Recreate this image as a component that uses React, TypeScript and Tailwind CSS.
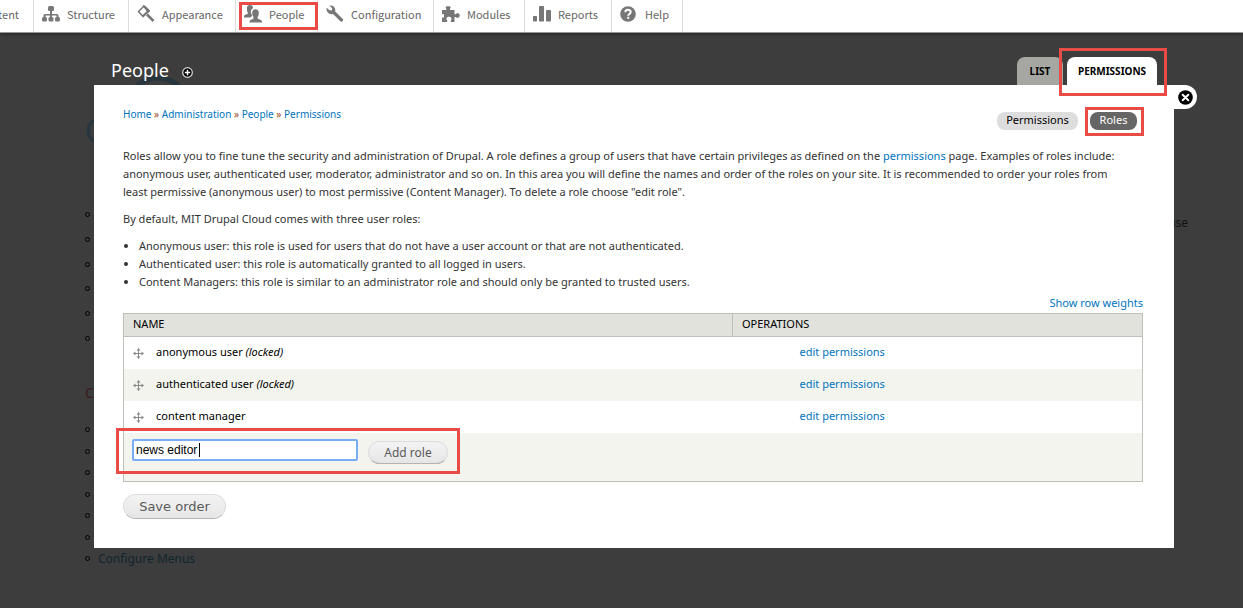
import type { ReactNode } from "react";

const StructureIcon = () => (
  <svg width="18" height="16" viewBox="0 0 18 16" fill="#777">
    <rect x="6" y="0" width="6" height="5" rx="1.5" />
    <path d="M8 4h2v4h5a1.5 1.5 0 0 1 1.5 1.5V11h-2V9.500H10V11H8V9.500H3.500V11h-2V9.500A1.500 1.500 0 0 1 3 8h5z" />
    <rect x="0" y="11" width="5" height="4.500" rx="1.500" />
    <rect x="6.500" y="11" width="5" height="4.500" rx="1.500" />
    <rect x="13" y="11" width="5" height="4.500" rx="1.500" />
  </svg>
);

const AppearanceIcon = () => (
  <svg width="18" height="18" viewBox="0 0 18 18" fill="none" stroke="#777">
    <path d="M6.500 1.500 1.500 6.500l4.500 5L12 6z" strokeWidth="1.500" fill="#fff" />
    <path d="M5.500 0 8 .5 13 5.500 11.500 7.500 9 5.500z" fill="#777" stroke="none" />
    <path d="M5.500 11.500 12 5.500" strokeWidth="2" />
    <path d="m10 9.500 6.500 6.500" strokeWidth="2.500" />
  </svg>
);

const PeopleIcon = () => (
  <svg width="18" height="18" viewBox="0 0 18 18" fill="#777">
    <path d="M6 0c2 0 3 1.200 3 3.200C7.300 4 6.700 5.400 6.900 7.300c.1 1 .5 1.900 1 2.500v1.400L6 12.500H0V11c0-1 2.500-1.300 3.800-2.200V7.300C3.100 6.500 2.900 5.400 2.900 3.400 2.900 1.200 4 0 6 0z" />
    <path d="M11.500 4.300c2.200 0 3.300 1.300 3.300 3.600 0 1.800-.5 3-1.200 3.900v1.700c1.400 1 4.400 1.400 4.400 3v1H5.500v-1c0-1.600 2.600-2 4-3v-1.700c-.8-.9-1.300-2.100-1.300-3.900 0-2.300 1.100-3.600 3.300-3.600z" />
  </svg>
);

const ConfigurationIcon = () => (
  <svg width="18" height="18" viewBox="0 0 18 18" fill="#777">
    <path d="M3.500.6C6.300-.3 9.500 1.700 9.300 5.300c0 .6-.1 1-.1 1.300l7.400 7.200c1.500 1.500-.7 3.900-2.300 2.400L7 8.900C4 9.900.8 8 .5 4.600c0-.7 0-1.300.2-1.900L3.800 5.500l2.100-.3.300-2z" />
  </svg>
);

const ModulesIcon = () => (
  <svg width="18" height="17" viewBox="0 0 18 17" fill="#777">
    <path d="M0 4h4.300V2.700C3.300 2 3.400.3 5 .3h2.200C9 .3 9 2 8 2.700V4h4.500v4.300h1.300c.6-1.400 3.900-1.500 3.900 1.200s-3.200 2.800-3.900 1.400h-1.300V16H8.800v-1.600c1.300-.9 1-3.700-1.800-3.700s-3.200 2.800-1.800 3.700V16H0v-4.500h2V8.300H0z" />
  </svg>
);

const ReportsIcon = () => (
  <svg width="18" height="16" viewBox="0 0 18 16" fill="#777">
    <rect x="0" y="10" width="4" height="5.500" rx=".8" />
    <rect x="6" y="0" width="5" height="15.500" rx=".8" />
    <rect x="13" y="4" width="5" height="11.500" rx=".8" />
  </svg>
);

const HelpIcon = () => (
  <svg width="16" height="16" viewBox="0 0 16 16">
    <circle cx="8" cy="8" r="7.800" fill="#777" />
    <path d="M5.300 6.200C5.400 3 10.700 3.100 10.700 6c0 2-2.500 1.900-2.500 3.800" fill="none" stroke="#fff" strokeWidth="2" />
    <rect x="7.200" y="10.800" width="2" height="2" fill="#fff" />
  </svg>
);

const DragHandle = () => (
  <svg width="11" height="11" viewBox="0 0 11 11" fill="#888">
    <path d="M5 1.500h1V5h3.500v1H6v3.500H5V6H1.500V5H5z" />
    <path d="M5.500 0 7.500 2.500h-4zM5.500 11l2-2.500h-4zM0 5.500l2.500-2v4zM11 5.500l-2.500-2v4z" />
  </svg>
);

const Highlight = ({ className }: { className: string }) => (
  <span className={`pointer-events-none absolute z-10 border-3 border-[#e94b46] ${className}`} />
);

const menu = [
  { label: "Structure", icon: <StructureIcon />, width: "w-[95px]" },
  { label: "Appearance", icon: <AppearanceIcon />, width: "w-[107px]" },
  { label: "People", icon: <PeopleIcon />, width: "w-[82px]", active: true },
  { label: "Configuration", icon: <ConfigurationIcon />, width: "w-[116px]" },
  { label: "Modules", icon: <ModulesIcon />, width: "w-[91px]" },
  { label: "Reports", icon: <ReportsIcon />, width: "w-[87px]" },
  { label: "Help", icon: <HelpIcon />, width: "w-[71px]" },
];

const crumbs = ["Home", "Administration", "People", "Permissions"];

const roles = [
  { name: "anonymous user", locked: true },
  { name: "authenticated user", locked: true },
  { name: "content manager", locked: false },
];

const Toolbar = () => (
  <nav className="relative z-20 flex h-[33px] border-b border-[#999] bg-white font-['Noto_Sans_CJK_SC',sans-serif] text-[11px] text-[#666] shadow-[0_1px_3px_#222]">
    <a href="#" className="flex h-8 w-[34px] items-center justify-end overflow-hidden border-r border-[#ddd] pr-3.5 pb-1">
      Content
    </a>
    {menu.map(({ label, icon, width, active }) => (
      <a
        key={label}
        href="#"
        className={`relative flex h-8 shrink-0 items-center border-r border-[#ddd] pb-1 pl-2 ${width}`}
      >
        <span className="w-[25px]">{icon}</span>
        {label}
        {active && <Highlight className="top-0.5 -right-px bottom-0.5 left-[3px]" />}
      </a>
    ))}
  </nav>
);

const Bullets = ({ count, className, children }: { count: number; className: string; children?: ReactNode }) => (
  <ul className={`flex flex-col justify-between ${className}`}>
    {Array.from({ length: count }, (_, i) => (
      <li key={i} className="flex h-[5px] items-center gap-2">
        <span className="size-[5px] rounded-full border border-black" />
        {i === count - 1 && children}
      </li>
    ))}
  </ul>
);

// The page under the dimmed overlay.
const DimmedPage = () => (
  <div className="px-[85px] pt-10 text-xs">
    <svg width="110" height="80" className="block" fill="none" stroke="#26353e">
      <circle cx="73" cy="35" r="30" strokeWidth="5" />
      <circle cx="15" cy="58" r="12" strokeWidth="3" />
    </svg>
    <div className="flex items-start justify-between pt-[59px]">
      <Bullets count={6} className="h-[129px]" />
      <p className="mr-[-30px] pt-px leading-5 text-[#111]">use</p>
    </div>
    <h2 className="pt-[42px] text-sm leading-5 text-[#3a1a1c]">C</h2>
    <Bullets count={7} className="mt-6 h-[134px]">
      <a href="#" className="text-[#10252d]">Configure Menus</a>
    </Bullets>
  </div>
);

const RolesTable = () => (
  <table className="w-full border-collapse border border-[#bebfb9] text-black">
    <thead>
      <tr className="h-[23px] border-b border-[#bebfb9] bg-[#e1e2dc] text-left">
        <th className="w-[609px] border-r border-[#bebfb9] px-[9px] pb-0.5 font-normal">NAME</th>
        <th className="px-[9px] pb-0.5 font-normal">OPERATIONS</th>
      </tr>
    </thead>
    <tbody>
      {roles.map(({ name, locked }) => (
        <tr key={name} className="h-8 even:bg-[#f3f4ee]">
          <td className="pb-0.5 pl-[9px]">
            <div className="flex items-center gap-3">
              <button type="button" aria-label={`Drag ${name}`} className="w-[11px] pt-1">
                <DragHandle />
              </button>
              <span>
                {name} {locked && <em>(locked)</em>}
              </span>
            </div>
          </td>
          <td className="pb-0.5 pl-[67px]">
            <a href="#" className="text-[#0074bd]">edit permissions</a>
          </td>
        </tr>
      ))}
      <tr className="h-[49px] bg-[#f3f4ee]">
        <td colSpan={2} className="pl-2 align-top">
          <div className="relative mt-1.5 flex w-fit items-start gap-2.5">
            <input
              type="text"
              aria-label="Role name"
              defaultValue="news editor"
              className="h-[22px] w-[226px] rounded-xs border-2 border-[#7aacf5] bg-white px-0.5 font-['Liberation_Sans',sans-serif] text-xs outline-none"
            />
            <span className="absolute top-1 left-[67px] h-3.5 w-px bg-black" />
            <button
              type="button"
              className="mt-0.5 h-[23px] w-20 rounded-full border border-[#ddd] border-b-[#b4b4b4] bg-linear-to-b from-[#f3f3f3] to-[#e6e6e6] pt-0.5 text-xs text-[#5a5a5a]"
            >
              Add role
            </button>
            <Highlight className="-top-[11px] -right-3 -bottom-2.5 -left-4" />
          </div>
        </td>
      </tr>
    </tbody>
  </table>
);

const Overlay = () => (
  <section className="absolute inset-x-0 top-[57px] mr-[69px] ml-[94px]">
    <header className="flex items-end justify-between px-[17px]">
      <div className="flex items-center gap-[13px] pb-[3px]">
        <h1 className="text-lg leading-6 text-white">People</h1>
        <button type="button" aria-label="Add to shortcuts" className="pt-1">
          <svg width="11" height="11" viewBox="0 0 11 11">
            <circle cx="5.500" cy="5.500" r="4.800" fill="#000" stroke="#ddd" strokeWidth="1.200" />
            <path d="M5.500 2.800v5.400M2.800 5.500h5.400" stroke="#fff" strokeWidth="1.500" />
          </svg>
        </button>
      </div>
      <nav className="flex gap-1 text-[10px] font-bold text-black">
        <a href="#" className="flex h-7 w-[46px] items-center justify-center rounded-t-lg bg-[#a6a7a2]">
          LIST
        </a>
        <a href="#" className="relative flex h-7 w-[90px] items-center justify-center rounded-t-lg bg-white">
          PERMISSIONS
          <Highlight className="-top-[9px] -right-2.5 -bottom-[11px] -left-2" />
        </a>
      </nav>
    </header>
    <div className="relative bg-white pt-5 pr-[31px] pb-[29px] pl-[29px] text-[11px] leading-[18px] text-[#333]">
      <button
        type="button"
        aria-label="Close overlay"
        className="absolute top-0 left-full flex h-6 w-[23px] items-center rounded-r-xl bg-white pl-1"
      >
        <svg width="15" height="15" viewBox="0 0 15 15">
          <circle cx="7.500" cy="7.500" r="7.300" fill="#000" />
          <path d="m4.700 4.700 5.600 5.600M10.300 4.700l-5.600 5.600" stroke="#fff" strokeWidth="2" strokeLinecap="round" />
        </svg>
      </button>
      <div className="flex items-start justify-between">
        <nav className="text-[10px]" aria-label="Breadcrumb">
          {crumbs.map((crumb, i) => (
            <span key={crumb}>
              {i > 0 && <span className="text-[#a04a20]"> » </span>}
              <a href="#" className="text-[#0074bd]">{crumb}</a>
            </span>
          ))}
        </nav>
        <nav className="mt-[7px] mr-1.5 flex gap-3">
          <a href="#" className="h-[18px] w-[81px] rounded-lg bg-[#ddd] text-center leading-4 text-black">
            Permissions
          </a>
          <a href="#" className="relative h-[18px] w-[47px] rounded-lg bg-[#666] text-center leading-4 text-white">
            Roles
            <Highlight className="-top-[5px] -right-[7px] -bottom-1.5 -left-[5px]" />
          </a>
        </nav>
      </div>
      <p className="mt-[17px] pr-5">
        Roles allow you to fine tune the security and administration of Drupal. A role defines a group of users that
        have certain privileges as defined on the <a href="#" className="text-[#0074bd]">permissions</a> page. Examples
        of roles include: anonymous user, authenticated user, moderator, administrator and so on. In this area you will
        define the names and order of the roles on your site. It is recommended to order your roles from least
        permissive (anonymous user) to most permissive (Content Manager). To delete a role choose "edit role".
      </p>
      <p className="mt-[9px]">By default, MIT Drupal Cloud comes with three user roles:</p>
      <ul className="mt-[9px] list-disc pl-4">
        <li>Anonymous user: this role is used for users that do not have a user account or that are not authenticated.</li>
        <li>Authenticated user: this role is automatically granted to all logged in users.</li>
        <li>Content Managers: this role is similar to an administrator role and should only be granted to trusted users.</li>
      </ul>
      <div className="mt-[3px] flex justify-end pb-px">
        <a href="#" className="text-[#0074bd]">Show row weights</a>
      </div>
      <RolesTable />
      <button
        type="button"
        className="mt-3 block h-[25px] w-[103px] rounded-full border border-[#ddd] border-b-[#b4b4b4] bg-linear-to-b from-[#f3f3f3] to-[#e6e6e6] pt-px font-['DejaVu_Sans',sans-serif] text-[13px] text-[#5a5a5a]"
      >
        Save order
      </button>
    </div>
  </section>
);

const App = () => {
  return (
    <main className="relative min-h-screen overflow-hidden bg-[#3d3d3d] font-['Noto_Sans',sans-serif]">
      <Toolbar />
      <DimmedPage />
      <Overlay />
    </main>
  );
};

export default App;
